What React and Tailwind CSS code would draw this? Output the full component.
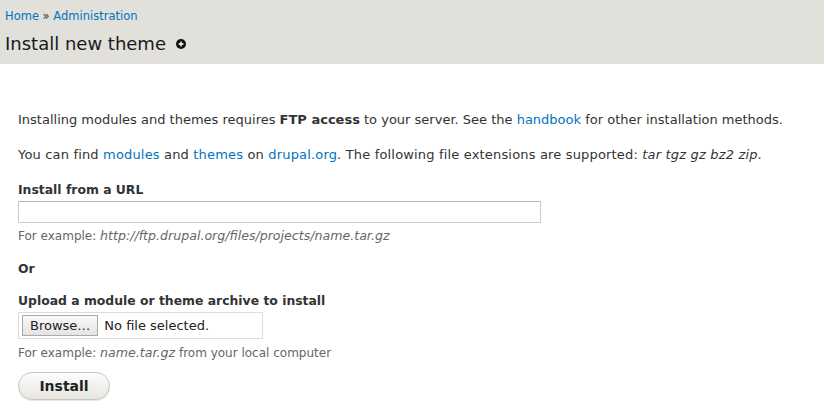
export default function App() {
  return (
    <div className="w-[824px] h-[413px] bg-white text-[#333] font-['DejaVu_Sans',sans-serif] overflow-hidden">
      <div className="h-[64px] bg-[#e1e0da] px-[5px] pt-[8px]">
        <div className="text-[11.5px] leading-[16px]">
          <a className="text-[#0074bd]">Home</a>
          <span className="text-[#333]"> » </span>
          <a className="text-[#0074bd]">Administration</a>
        </div>
        <h1 className="mt-[8px] text-[18px] leading-[24px] text-[#1a1a1a] flex items-center">
          Install new theme
          <span className="ml-[10px] inline-flex w-[10px] h-[10px] rounded-full bg-[#111] items-center justify-center">
            <svg width="6" height="6" viewBox="0 0 6 6">
              <path d="M3 0.5v5M0.5 3h5" stroke="#fff" strokeWidth="1.4" />
            </svg>
          </span>
        </h1>
      </div>

      <div className="px-[18px] pt-[47px] text-[13px] leading-[18px]">
        <p>
          Installing modules and themes requires <strong>FTP access</strong> to your server. See the{" "}
          <a className="text-[#0074bd]">handbook</a> for other installation methods.
        </p>
        <p className="mt-[17px] tracking-[0.17px]">
          You can find <a className="text-[#0074bd]">modules</a> and <a className="text-[#0074bd]">themes</a> on{" "}
          <a className="text-[#0074bd]">drupal.org</a>. The following file extensions are supported:{" "}
          <em>tar tgz gz bz2 zip</em>.
        </p>

        <div className="mt-[17px]">
          <label className="block font-bold text-[12.4px]">Install from a URL</label>
          <div className="mt-[2px] w-[523px] h-[22px] border border-[#ccc] border-t-[#b4b4b4] bg-white" />
          <div className="mt-[5px] text-[12px] leading-[16px] text-[#666]">
            For example: <em className="text-[12.6px]">http://ftp.drupal.org/files/projects/name.tar.gz</em>
          </div>
        </div>

        <div className="mt-[16px] font-bold text-[12.4px]">Or</div>

        <div className="mt-[14px]">
          <label className="block font-bold text-[12.4px]">Upload a module or theme archive to install</label>
          <div className="mt-[2px] w-[245px] h-[27px] border border-[#ddd] flex items-center px-[3px]">
            <span className="h-[21px] px-[7px] flex items-center border border-[#aaa] bg-gradient-to-b from-[#fafafa] to-[#e4e4e4] text-[#222] text-[13px]">
              Browse…
            </span>
            <span className="ml-[6px] text-[#222]">No file selected.</span>
          </div>
          <div className="mt-[6px] text-[12px] leading-[16px] text-[#666]">
            For example: <em className="text-[12.6px]">name.tar.gz</em> from your local computer
          </div>
        </div>

        <button className="mt-[11px] w-[92px] h-[28px] rounded-full border border-[#c4c3bd] bg-gradient-to-b from-[#fdfdfc] to-[#e6e5e0] text-[#222] font-bold text-[14px] shadow-[0_1px_1px_rgba(0,0,0,0.1)]">
          Install
        </button>
      </div>
    </div>
  );
}
